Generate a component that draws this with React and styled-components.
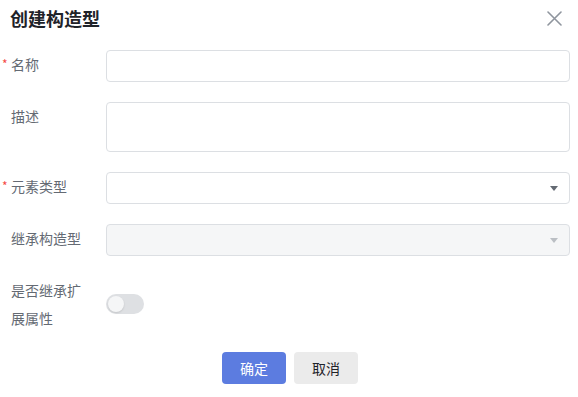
import React, { useState } from 'react'
import styled, { createGlobalStyle } from 'styled-components'

const GlobalStyle = createGlobalStyle`
  html, body {
    margin: 0;
    padding: 0;
    background: #ffffff;
  }
  body {
    font-family: "Noto Sans CJK SC", "Noto Sans", sans-serif;
    color: #1f2329;
  }
  * { box-sizing: border-box; }
`

const Dialog = styled.div`
  width: 578px;
  height: 397px;
  background: #fff;
  display: flex;
  flex-direction: column;
`

const Header = styled.div`
  height: 36px;
  display: flex;
  align-items: center;
  justify-content: space-between;
  padding: 0 16px 0 10px;
`

const Title = styled.h2`
  margin: 0;
  font-size: 18px;
  font-weight: 700;
  color: #1f2329;
  line-height: 24px;
`

const CloseButton = styled.button`
  border: none;
  background: transparent;
  padding: 0;
  width: 16px;
  height: 16px;
  display: flex;
  align-items: center;
  justify-content: center;
  cursor: pointer;
`

const Form = styled.form`
  margin-top: 14px;
  padding-right: 8px;
  display: flex;
  flex-direction: column;
  gap: 20px;
`

const Row = styled.div`
  display: flex;
  align-items: ${p => (p.center ? 'center' : 'flex-start')};
`

const Label = styled.label`
  position: relative;
  flex: none;
  width: 106px;
  padding: 0 15px 0 11px;
  font-size: 14px;
  line-height: 28px;
  color: #646a73;
`

const Star = styled.span`
  position: absolute;
  left: 2px;
  top: 0;
  color: #f54a45;
  font-size: 12px;
`

const Input = styled.input`
  flex: 1;
  height: 32px;
  border: 1px solid #dcdfe3;
  border-radius: 4px;
  padding: 0 10px;
  font: inherit;
  font-size: 14px;
  outline: none;
  background: #fff;
`

const TextArea = styled.textarea`
  flex: 1;
  height: 50px;
  border: 1px solid #dcdfe3;
  border-radius: 4px;
  padding: 6px 10px;
  font: inherit;
  font-size: 14px;
  resize: none;
  outline: none;
`

const Select = styled.div`
  flex: 1;
  height: 32px;
  border: 1px solid #dcdfe3;
  border-radius: 4px;
  background: ${p => (p.disabled ? '#f5f6f7' : '#fff')};
  display: flex;
  align-items: center;
  justify-content: flex-end;
  padding-right: 11px;
`

const Caret = styled.span`
  width: 0;
  height: 0;
  border-left: 4px solid transparent;
  border-right: 4px solid transparent;
  border-top: 5px solid ${p => (p.disabled ? '#bbbfc4' : '#646a73')};
  margin-top: 1px;
`

const Switch = styled.button`
  position: relative;
  width: 38px;
  height: 20px;
  border: none;
  border-radius: 10px;
  background: ${p => (p.on ? '#5c7ce0' : '#dee0e3')};
  padding: 0;
  cursor: pointer;
`

const Knob = styled.span`
  position: absolute;
  top: 2px;
  left: ${p => (p.on ? '20px' : '2px')};
  width: 16px;
  height: 16px;
  border-radius: 50%;
  background: #f5f6f7;
  box-shadow: 0 1px 2px rgba(0, 0, 0, 0.12);
`

const Footer = styled.div`
  margin-top: 20px;
  display: flex;
  justify-content: center;
  gap: 8px;
  padding-left: 2px;
`

const Button = styled.button`
  width: 64px;
  height: 32px;
  border: none;
  border-radius: 4px;
  font: inherit;
  font-size: 14px;
  cursor: pointer;
  background: ${p => (p.primary ? '#5c7ce0' : '#ebebeb')};
  color: ${p => (p.primary ? '#ffffff' : '#1f2329')};
`

export default function App() {
  const [extend, setExtend] = useState(false)

  return (
    <>
      <GlobalStyle />
      <Dialog>
        <Header>
          <Title>创建构造型</Title>
          <CloseButton type="button" aria-label="close">
            <svg width="15" height="15" viewBox="0 0 15 15">
              <path d="M1 1L14 14M14 1L1 14" stroke="#8f959e" strokeWidth="1.6" strokeLinecap="round" />
            </svg>
          </CloseButton>
        </Header>

        <Form onSubmit={e => e.preventDefault()}>
          <Row>
            <Label><Star>*</Star>名称</Label>
            <Input />
          </Row>
          <Row>
            <Label>描述</Label>
            <TextArea />
          </Row>
          <Row>
            <Label><Star>*</Star>元素类型</Label>
            <Select><Caret /></Select>
          </Row>
          <Row>
            <Label>继承构造型</Label>
            <Select disabled><Caret disabled /></Select>
          </Row>
          <Row center>
            <Label>是否继承扩展属性</Label>
            <Switch type="button" on={extend ? 1 : 0} onClick={() => setExtend(!extend)}>
              <Knob on={extend ? 1 : 0} />
            </Switch>
          </Row>
        </Form>

        <Footer>
          <Button primary>确定</Button>
          <Button>取消</Button>
        </Footer>
      </Dialog>
    </>
  )
}
